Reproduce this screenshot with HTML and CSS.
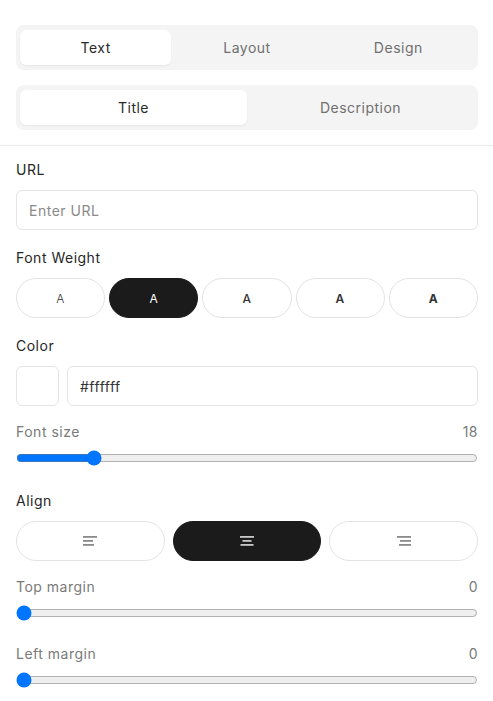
FILE: index.html
```html
<!DOCTYPE html>
<html lang="en">
<head>
<meta charset="utf-8">
<title>Text settings</title>
<link rel="stylesheet" href="styles.css">
</head>
<body>
<div class="panel">
  <div class="head">
    <div class="tabs tabs--three">
      <button class="tab tab--active">Text</button>
      <button class="tab">Layout</button>
      <button class="tab">Design</button>
    </div>
    <div class="tabs tabs--two">
      <button class="tab tab--active">Title</button>
      <button class="tab">Description</button>
    </div>
  </div>

  <div class="body">
    <div class="field">
      <div class="label">URL</div>
      <input class="input" type="text" placeholder="Enter URL">
    </div>

    <div class="field">
      <div class="label">Font Weight</div>
      <div class="pills pills--five">
        <button class="pill w300">A</button>
        <button class="pill w400 pill--active">A</button>
        <button class="pill w500">A</button>
        <button class="pill w600">A</button>
        <button class="pill w700">A</button>
      </div>
    </div>

    <div class="field field--color">
      <div class="label">Color</div>
      <div class="color-row">
        <div class="swatch"></div>
        <input class="input" type="text" value="#ffffff">
      </div>
    </div>

    <div class="field field--slider">
      <div class="slider-head"><span>Font size</span><span>18</span></div>
      <input class="range" type="range" min="8" max="72" value="18">
    </div>

    <div class="field field--align">
      <div class="label">Align</div>
      <div class="pills pills--three">
        <button class="pill">
          <svg class="align-icon" width="14" height="10" viewBox="0 0 14 10"><rect x="0" y="0" width="14" height="1.8"/><rect x="0" y="4" width="10" height="1.8"/><rect x="0" y="8" width="11" height="1.8"/></svg>
        </button>
        <button class="pill pill--active">
          <svg class="align-icon" width="14" height="10" viewBox="0 0 14 10"><rect x="0" y="0" width="14" height="1.8"/><rect x="2.5" y="4" width="9" height="1.8"/><rect x="0.5" y="8" width="13" height="1.8"/></svg>
        </button>
        <button class="pill">
          <svg class="align-icon" width="14" height="10" viewBox="0 0 14 10"><rect x="0" y="0" width="14" height="1.8"/><rect x="3" y="4" width="11" height="1.8"/><rect x="2" y="8" width="12" height="1.8"/></svg>
        </button>
      </div>
    </div>

    <div class="field field--slider field--slider-mid">
      <div class="slider-head"><span>Top margin</span><span>0</span></div>
      <input class="range" type="range" min="0" max="100" value="0">
    </div>

    <div class="field field--slider">
      <div class="slider-head"><span>Left margin</span><span>0</span></div>
      <input class="range" type="range" min="0" max="100" value="0">
    </div>
  </div>
</div>
</body>
</html>
```
FILE: styles.css
```css
* { box-sizing: border-box; }

body {
  margin: 0;
  background: #ffffff;
  font-family: Inter, "Noto Sans", "DejaVu Sans", sans-serif;
  font-size: 14px;
  letter-spacing: 0.5px;
  color: #333333;
}

button {
  font-family: inherit;
  letter-spacing: inherit;
  cursor: pointer;
}

.head {
  padding: 25px 15px 15px 16px;
  border-bottom: 1px solid #ececec;
  display: flex;
  flex-direction: column;
  gap: 15px;
}

.tabs {
  display: grid;
  background: #f4f4f4;
  border-radius: 8px;
  padding: 5px 4px;
  height: 45px;
}

.tabs--three { grid-template-columns: repeat(3, 1fr); }
.tabs--two { grid-template-columns: repeat(2, 1fr); }

.tab {
  border: none;
  background: transparent;
  border-radius: 6px;
  font-size: 14px;
  color: #707070;
  font-weight: 400;
  padding: 0;
}

.tab--active {
  background: #ffffff;
  color: #2a2a2a;
  box-shadow: 0 1px 2px rgba(0, 0, 0, 0.06);
}

.body {
  padding: 14px 15px 0 16px;
}

.field { margin-bottom: 18px; }
.field--color { margin-bottom: 16px; }
.field--align { margin-bottom: 16px; }
.field--slider { margin-bottom: 25px; }
.field--slider-mid { margin-bottom: 23px; }

.label {
  height: 20px;
  line-height: 20px;
  font-weight: 400;
  color: #262626;
  margin-bottom: 10px;
}

.input {
  display: block;
  width: 100%;
  height: 40px;
  border: 1px solid #e4e4e4;
  border-radius: 6px;
  padding: 0 12px;
  font-family: inherit;
  font-size: 14px;
  letter-spacing: inherit;
  color: #333333;
  background: #ffffff;
  outline: none;
}

.input::placeholder { color: #8a8a8a; }

.pills {
  display: grid;
  height: 40px;
}

.pills--five { grid-template-columns: repeat(5, 1fr); gap: 4px; }
.pills--three { grid-template-columns: repeat(3, 1fr); gap: 8px; }

.pill {
  border: 1px solid #e3e3e3;
  background: #ffffff;
  border-radius: 20px;
  font-size: 12px;
  color: #333333;
  padding: 0;
  display: flex;
  align-items: center;
  justify-content: center;
}

.pill--active {
  background: #1b1b1b;
  border-color: #1b1b1b;
  color: #ffffff;
}

.w300 { font-weight: 300; }
.w400 { font-weight: 400; }
.w500 { font-weight: 500; }
.w600 { font-weight: 600; }
.w700 { font-weight: 700; }

.align-icon { fill: #8a8a8a; display: block; }
.pill--active .align-icon { fill: #c8c8c8; }

.color-row {
  display: flex;
  gap: 8px;
}

.swatch {
  flex: 0 0 43px;
  height: 40px;
  border: 1px solid #e4e4e4;
  border-radius: 6px;
  background: #ffffff;
}

.color-row .input { flex: 1; }

.slider-head {
  display: flex;
  justify-content: space-between;
  height: 20px;
  line-height: 20px;
  color: #7a7a7a;
}

.range {
  display: block;
  width: 100%;
  margin: 8px 0 0;
  height: 16px;
}
```
